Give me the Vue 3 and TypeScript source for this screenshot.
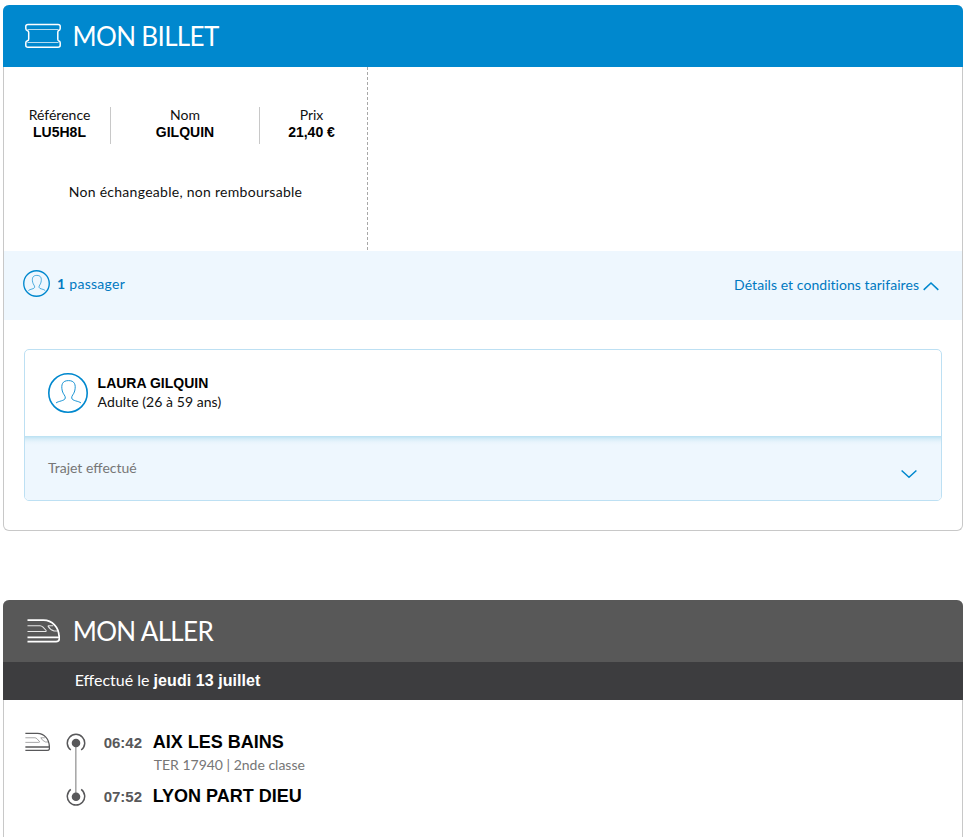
<script setup lang="ts">
interface Fact {
  label: string
  value: string
}

interface Stop {
  time: string
  city: string
  detail?: string
}

const facts: Fact[] = [
  { label: 'Référence', value: 'LU5H8L' },
  { label: 'Nom', value: 'GILQUIN' },
  { label: 'Prix', value: '21,40 €' },
]

const stops: Stop[] = [
  { time: '06:42', city: 'AIX LES BAINS', detail: 'TER 17940 | 2nde classe' },
  { time: '07:52', city: 'LYON PART DIEU' },
]
</script>

<template>
  <main class="page">
    <section class="card ticket">
      <header class="card-head blue">
        <svg class="ticket-icon" width="36" height="26" viewBox="0 0 36 26" fill="none" stroke="#fff">
          <path stroke-width="1.5" d="M3 1.500H33Q35.200 1.500 35.200 3.300V5.500Q35.200 7.200 33.500 7.700Q32.800 8 32.800 9.500V16Q32.800 17.500 33.500 17.800Q35.200 18.300 35.200 19.800V22.200Q35.200 24.200 33 24.200H3Q.8 24.200 .8 22.200V19.800Q.8 18.300 2.500 17.800Q3.700 17.500 3.700 16V9.500Q3.700 8 2.500 7.700Q.8 7.200 .8 5.500V3.300Q.8 1.500 3 1.500Z" />
          <path stroke-width="1" opacity=".7" d="M2.500 6.500H33.500M2.500 19.500H33.500" />
        </svg>
        <h2 class="title-billet">MON BILLET</h2>
      </header>

      <div class="summary">
        <div class="summary-left">
          <dl class="facts">
            <div v-for="fact in facts" :key="fact.label" class="fact">
              <dt>{{ fact.label }}</dt>
              <dd>{{ fact.value }}</dd>
            </div>
          </dl>
          <p class="conditions">Non échangeable, non remboursable</p>
        </div>
      </div>

      <div class="passenger-bar">
        <svg width="27" height="27" viewBox="0 0 40 40" fill="none" stroke="#0088ce">
          <circle cx="20" cy="20" r="18.9" stroke-width="2" />
          <path stroke-width="1" d="M8 30.5C10 28 17 28.5 17.3 25.5C17.5 23 15.2 22 14.3 18C13 12 14.5 8 20.5 8C26.5 8 28 12 26.7 18C25.8 22 23.5 23 23.7 25.5C24 28.5 31 28 33 30.5" />
        </svg>
        <span class="count"><b>1</b> passager</span>
        <a class="details">Détails et conditions tarifaires</a>
        <svg class="chevron-up" width="16" height="10" viewBox="0 0 16 10" fill="none" stroke="#0088ce" stroke-width="1.6">
          <path d="M.7 8.8L8 2L15.3 8.8" />
        </svg>
      </div>

      <div class="traveller">
        <div class="traveller-top">
          <svg width="40" height="40" viewBox="0 0 40 40" fill="none" stroke="#0088ce">
            <circle cx="20" cy="20" r="19.2" stroke-width="1.6" />
            <path stroke-width=".9" d="M8 30C10 28 17 28 17.300 25C17.500 22.500 15.200 21.500 14.300 18C12.800 11.500 14.500 7.600 20.500 7.600C26.500 7.600 28.200 11.500 26.700 18C25.800 21.500 23.500 22.500 23.700 25C24 28 31 28 33 30" />
          </svg>
          <div class="identity">
            <strong>LAURA GILQUIN</strong>
            <span>Adulte (26 à 59 ans)</span>
          </div>
        </div>
        <div class="traveller-bottom">
          <span class="status">Trajet effectué</span>
          <svg class="chevron-down" width="16" height="10" viewBox="0 0 16 10" fill="none" stroke="#0088ce" stroke-width="1.5">
            <path d="M.6 1.500L8 8.200L15.400 1.500" />
          </svg>
        </div>
      </div>
    </section>

    <section class="card journey">
      <header class="card-head grey">
        <svg class="train-icon" width="33" height="26" viewBox="0 0 34 26" fill="none" stroke="#fff">
          <path stroke-width="1.700" d="M.5 1.800H17C26 2 32.800 9 33 18.500M.5 19.500H33M.5 24H30Q33.300 24 33.300 21V17.500" />
          <path stroke-width="1.100" opacity=".85" d="M.5 7.500H13.500Q15 7.500 16.500 9L19.500 12.200Q20.500 13.500 18.500 13.500H.5M21.500 7.500H27M21.500 7.500Q23.500 11.500 28 13H31.500" />
        </svg>
        <h2 class="title-aller">MON ALLER</h2>
      </header>
      <div class="date-bar"><span class="done">Effectué le</span> <b>jeudi 13 juillet</b></div>

      <div class="route">
        <svg class="train-small" width="25" height="20" viewBox="0 0 34 26" preserveAspectRatio="none" fill="none" stroke="#58585a">
          <path stroke-width="1.700" d="M.5 1.800H17C26 2 32.800 9 33 18.500M.5 19.500H33M.5 24H30Q33.300 24 33.300 21V17.500" />
          <path stroke-width="1" opacity=".7" d="M.5 7.500H13.500Q15 7.500 16.500 9L19.500 12.200Q20.500 13.500 18.500 13.500H.5M21.500 7.500H27M21.500 7.500Q23.500 11.500 28 13H31.500" />
        </svg>
        <svg class="track" width="20" height="74" viewBox="0 0 20 74" fill="none">
          <path stroke="#a9a9a9" stroke-width="1.600" d="M9.800 14V60" />
          <path stroke="#58585a" stroke-width="1.500" d="M4.800 17A8.700 8.700 0 1 1 15.200 17M4.800 56.400A8.700 8.700 0 1 0 15.200 56.400" />
          <circle cx="10" cy="10" r="4.300" fill="#58585a" />
          <circle cx="10" cy="63.700" r="4.300" fill="#58585a" />
        </svg>
        <ol class="stops">
          <li v-for="stop in stops" :key="stop.time" class="stop">
            <time>{{ stop.time }}</time>
            <div class="place">
              <strong>{{ stop.city }}</strong>
              <span v-if="stop.detail">{{ stop.detail }}</span>
            </div>
          </li>
        </ol>
      </div>
    </section>
  </main>
</template>

<style>
body {
  background: #fff;
  overflow: hidden;
}
</style>

<style scoped>
.page {
  box-sizing: border-box;
  width: 967px;
  height: 837px;
  padding: 5px 4px 0 3px;
  overflow: hidden;
  font-family: Lato, 'Liberation Sans', sans-serif;
  font-size: 14px;
  color: #111;
}

h2,
dl,
dd,
p,
ol {
  margin: 0;
  padding: 0;
}

.card {
  box-sizing: border-box;
  border: 1px solid #c8c8c8;
  border-top: 0;
  border-radius: 6px;
}

.ticket {
  height: 526px;
}

.card-head {
  display: flex;
  align-items: center;
  height: 62px;
  margin: 0 -1px;
  border-radius: 6px 6px 0 0;
  color: #fff;
}

.blue {
  background: #0088ce;
}

.grey {
  background: #585858;
}

.card-head h2 {
  font-size: 26px;
  font-weight: 400;
  line-height: 32px;
  letter-spacing: -0.65px;
  white-space: nowrap;
}

.ticket-icon {
  margin: 0 11.5px 0 22px;
}

.train-icon {
  margin: 0 12.7px 0 24px;
}

.summary {
  display: flex;
  height: 184px;
}

.summary-left {
  box-sizing: border-box;
  width: 364px;
  padding: 40px 4px 0 5px;
  background: repeating-linear-gradient(#a8a8a8 0 3px, transparent 3px 5px) right top / 1px 100% no-repeat;
}

.facts {
  display: grid;
  grid-template-columns: 102px 149px 103px;
}

.fact {
  box-sizing: border-box;
  height: 37px;
  line-height: 17px;
  text-align: center;
}

.fact:not(:last-child) {
  border-right: 1px solid #c8c8c8;
}

.fact dt {
  height: 18px;
  margin-top: -1px;
}

.fact dd,
.identity strong {
  font-family: 'Liberation Sans', sans-serif;
  font-weight: 700;
  color: #000;
}

.conditions {
  margin: 39px 2px 0 0;
  line-height: 18px;
  letter-spacing: 0.28px;
  text-align: center;
}

.passenger-bar {
  box-sizing: border-box;
  display: flex;
  align-items: center;
  height: 69px;
  padding: 0 23px 4px 19px;
  background: #eef7fe;
  color: #0079c1;
}

.count {
  margin-left: 7px;
  letter-spacing: 0.28px;
}

.details {
  margin-left: auto;
  padding-top: 2px;
  letter-spacing: 0.05px;
}

.chevron-up {
  margin: 5px 0 0 4px;
}

.traveller {
  box-sizing: border-box;
  height: 152px;
  margin: 29px 20px 0;
  border: 1px solid #bde0f3;
  border-radius: 5px;
  overflow: hidden;
}

.traveller-top {
  display: flex;
  box-sizing: border-box;
  height: 86px;
  padding: 23px 23px 0;
}

.identity {
  display: flex;
  flex-direction: column;
  margin-left: 9.6px;
  padding-top: 1px;
  line-height: 18px;
  letter-spacing: 0.06px;
}

.identity strong {
  letter-spacing: 0;
}

.identity span {
  line-height: 20px;
}

.traveller-bottom {
  display: flex;
  justify-content: space-between;
  box-sizing: border-box;
  height: 64px;
  padding: 23px 24px 0 23px;
  background: linear-gradient(#b9e0f2 0, #d7edf8 3px, #e8f4fc 6px, #eef7fe 9px);
  color: #767676;
  line-height: 18px;
}

.chevron-down {
  margin-top: 10px;
}

.journey {
  height: 260px;
  margin-top: 69px;
}

.date-bar {
  height: 38px;
  margin: 0 -1px;
  padding-left: 71.7px;
  box-sizing: border-box;
  background: #3d3d3f;
  color: #fff;
  font-size: 16px;
  line-height: 36px;
}

.date-bar b {
  font-family: 'Liberation Sans', sans-serif;
  letter-spacing: 0.06px;
}

.route {
  display: flex;
  align-items: flex-start;
  padding: 32px 0 0 21px;
}

.train-small {
  flex: none;
}

.track {
  flex: none;
  margin: 1px 0 0 16px;
}

.stops {
  margin-left: 17.7px;
  list-style: none;
}

.stop {
  display: flex;
  height: 54px;
}

.stop time {
  width: 49px;
  font: 700 15px/22px 'Liberation Sans', sans-serif;
  color: #58585a;
}

.place {
  display: flex;
  flex-direction: column;
  color: #767676;
}

.place strong {
  font: 700 18px/20px 'Liberation Sans', sans-serif;
  color: #000;
}

.place span {
  margin: 4px 0 0 1px;
  line-height: 18px;
}
</style>
